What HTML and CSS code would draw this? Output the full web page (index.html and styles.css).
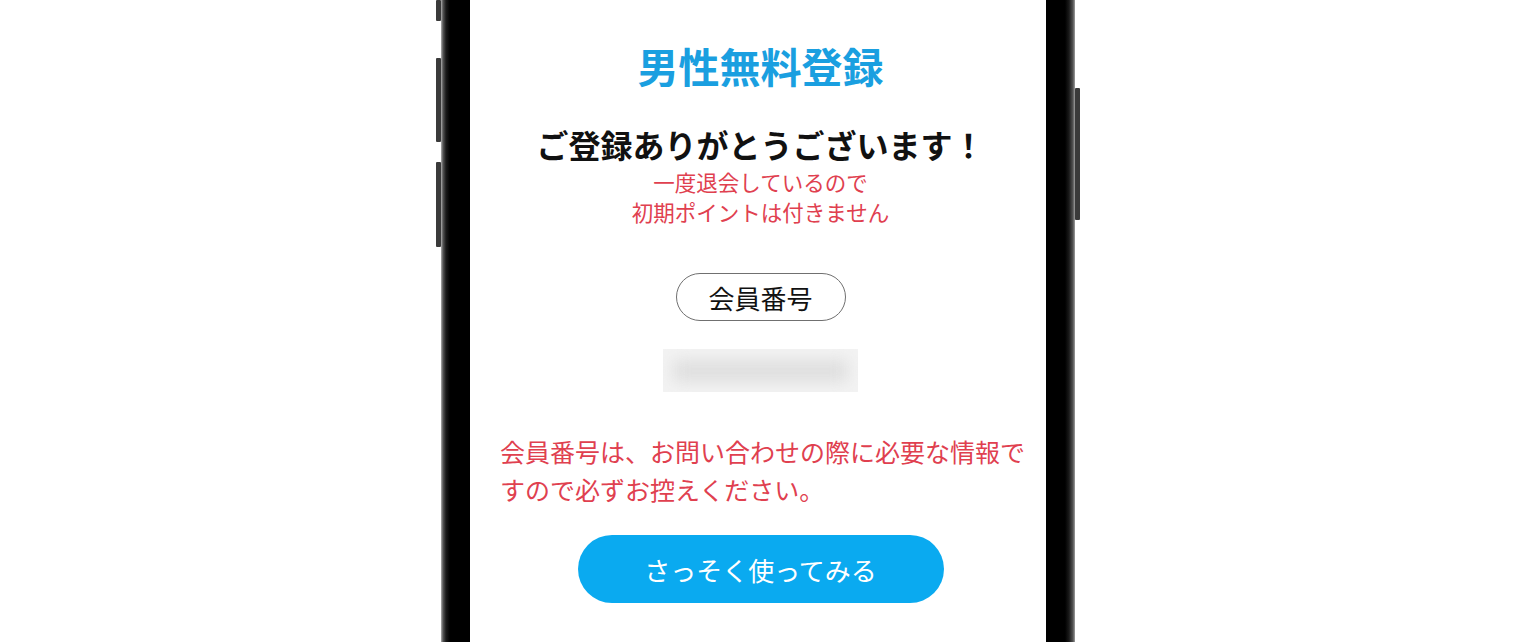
FILE: index.html
```html
<!DOCTYPE html>
<html lang="ja">
<head>
<meta charset="utf-8">
<title>男性無料登録</title>
<link rel="stylesheet" href="styles.css">
</head>
<body>
<div class="stage">
  <div class="device">
    <span class="side-btn btn-a"></span>
    <span class="side-btn btn-b"></span>
    <span class="side-btn btn-c"></span>
    <span class="side-btn btn-d"></span>
    <div class="screen">
      <h1 class="title">男性無料登録</h1>
      <p class="thanks">ご登録ありがとうございます！</p>
      <p class="warn">一度退会しているので<br>初期ポイントは付きません</p>
      <div class="pill">会員番号</div>
      <div class="blurbox"><div class="blurinner"></div></div>
      <p class="note">会員番号は、お問い合わせの際に必要な情報ですので必ずお控えください。</p>
      <a class="cta" href="#">さっそく使ってみる</a>
    </div>
  </div>
</div>
</body>
</html>
```

FILE: styles.css
```css
* { box-sizing: border-box; }
html, body {
  margin: 0;
  padding: 0;
  background: #ffffff;
  font-family: "Noto Sans CJK JP", "Noto Sans", sans-serif;
}
.stage {
  width: 1518px;
  height: 642px;
  overflow: hidden;
  display: flex;
}
.device {
  position: relative;
  margin-left: 441px;
  width: 634px;
  height: 642px;
  padding: 0 29px;
  background: linear-gradient(to right,
    #b0b0b0 0px, #555 2px, #1a1a1a 5px, #000 9px,
    #000 calc(100% - 10px), #1a1a1a calc(100% - 6px), #555 calc(100% - 2px), #a0a0a0 100%);
}
.side-btn {
  position: absolute;
  width: 5px;
  background: #3a3a3a;
  border-radius: 1px;
}
.btn-a { left: -5px; top: 0; height: 21px; }
.btn-b { left: -5px; top: 58px; height: 84px; }
.btn-c { left: -5px; top: 162px; height: 85px; }
.btn-d { right: -5px; top: 88px; height: 132px; }
.screen {
  width: 576px;
  height: 642px;
  background: #ffffff;
  display: flex;
  flex-direction: column;
  align-items: center;
  padding-top: 41px;
  padding-left: 5px;
}
.title {
  margin: 0;
  font-size: 41px;
  line-height: 48px;
  font-weight: 700;
  color: #1a9fe0;
}
.thanks {
  margin: 35px 0 0;
  font-size: 32px;
  line-height: 40px;
  font-weight: 700;
  color: #111111;
}
.warn {
  margin: 3px 0 0;
  font-size: 21.5px;
  line-height: 30px;
  color: #e0404f;
  text-align: center;
}
.pill {
  margin-top: 46px;
  width: 170px;
  height: 48px;
  border: 1.5px solid #707070;
  border-radius: 24px;
  display: flex;
  align-items: center;
  justify-content: center;
  font-size: 26px;
  color: #111111;
}
.blurbox {
  margin-top: 28px;
  width: 195px;
  height: 43px;
  background: #f3f3f3;
  overflow: hidden;
  display: flex;
  align-items: center;
  justify-content: center;
}
.blurinner {
  width: 175px;
  height: 22px;
  background: #dedede;
  filter: blur(8px);
}
.note {
  align-self: flex-start;
  margin: 40px 0 0 25px;
  width: 528px;
  font-size: 25px;
  line-height: 38px;
  color: #e0404f;
}
.cta {
  margin-top: 27px;
  width: 366px;
  height: 68px;
  border-radius: 34px;
  background: #0aaaf0;
  color: #ffffff;
  text-decoration: none;
  font-size: 26px;
  display: flex;
  align-items: center;
  justify-content: center;
}
```
